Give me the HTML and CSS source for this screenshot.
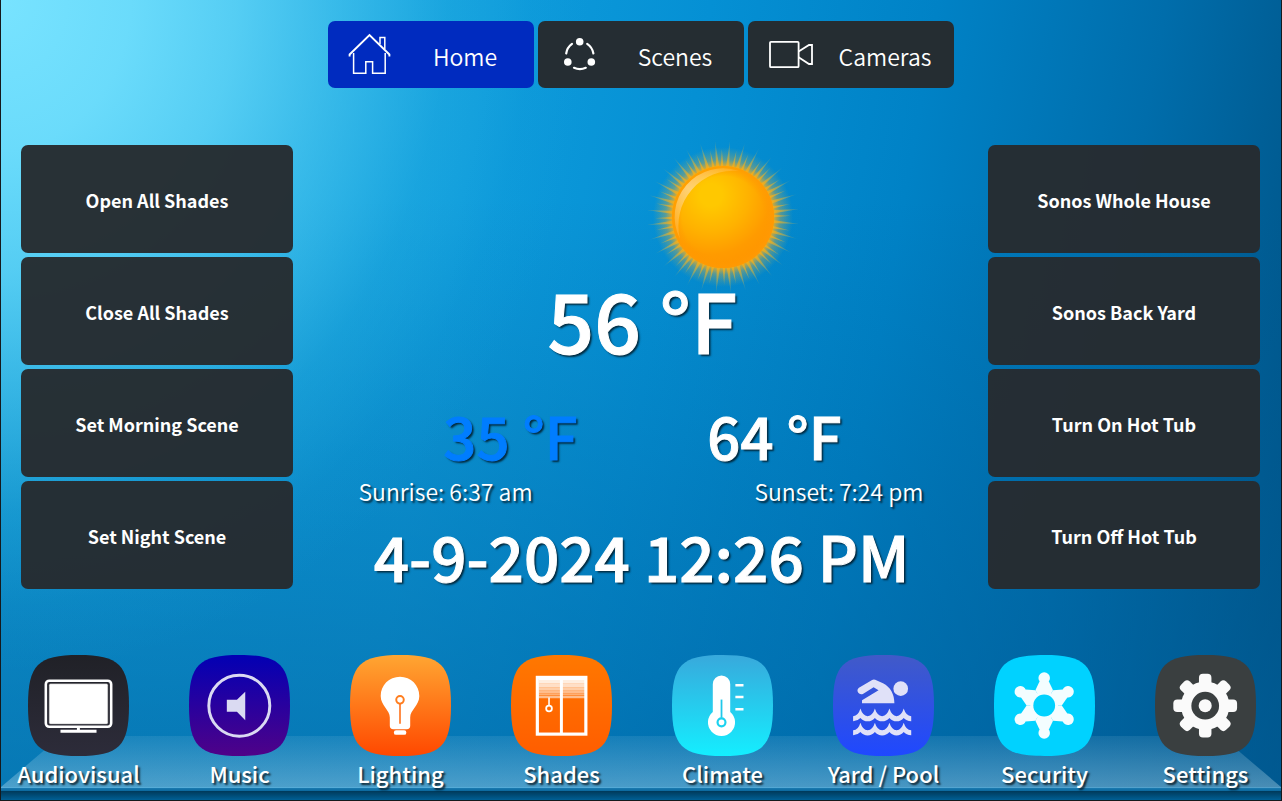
FILE: index.html
```html
<!DOCTYPE html>
<html lang="en">
<head>
<meta charset="UTF-8" />
<meta name="viewport" content="width=device-width, initial-scale=1" />
<title>Home Control</title>
<link rel="stylesheet" href="styles.css">
</head>
<body>

<nav class="tabs">
  <button class="tab active">
    <svg class="tab-icon" viewBox="0 0 48 48" fill="none" stroke="#fff" stroke-width="1.5">
      <path d="M3.6 25.5V23.5L23.5 4L43.4 23.5V25.5" stroke-width="1.9"/>
      <path d="M7.6 22V42.2H19.8V30.8H26.6V42.2H39.2V22"/>
      <path d="M34 13V6.5H38.8V18"/>
    </svg>
    <span>Home</span>
  </button>
  <button class="tab">
    <svg class="tab-icon" viewBox="0 0 48 48" fill="none" stroke="#fff" stroke-width="2.2" stroke-linecap="round">
      <path d="M10.2 22.5A14.3 14.3 0 0 1 16 12.8M31.2 12.8A14.3 14.3 0 0 1 37.4 22.5M18 36.8A15 15 0 0 0 29.8 36.8"/>
      <g fill="#fff" stroke="none">
        <circle cx="23.7" cy="10.7" r="3.8"/>
        <circle cx="11.8" cy="31" r="3.8"/>
        <circle cx="35.3" cy="31" r="3.8"/>
      </g>
    </svg>
    <span>Scenes</span>
  </button>
  <button class="tab">
    <svg class="tab-icon" viewBox="0 0 48 48" fill="none" stroke="#fff" stroke-width="1.8">
      <rect x="4" y="10.8" width="28.6" height="25.4" rx="1"/>
      <path d="M32.6 20.5L43 14H46V33H43L32.6 26.3"/>
    </svg>
    <span>Cameras</span>
  </button>
</nav>

<main class="panel">
  <div class="side">
    <button class="action">Open All Shades</button>
    <button class="action">Close All Shades</button>
    <button class="action">Set Morning Scene</button>
    <button class="action">Set Night Scene</button>
  </div>

  <section class="weather">
    <div class="sky">
      <svg class="sun" viewBox="-75 -75 150 150">
        <defs>
          <radialGradient id="glow" gradientUnits="userSpaceOnUse" cx="0" cy="0" r="70">
            <stop offset="0.72" stop-color="#ffae10" stop-opacity="0.9"/>
            <stop offset="0.82" stop-color="#d9b040" stop-opacity="0.4"/>
            <stop offset="1" stop-color="#a0b070" stop-opacity="0"/>
          </radialGradient>
          <radialGradient id="ray" gradientUnits="userSpaceOnUse" cx="0" cy="0" r="76">
            <stop offset="0.66" stop-color="#ffae10" stop-opacity="0.8"/>
            <stop offset="0.82" stop-color="#e8b52c" stop-opacity="0.5"/>
            <stop offset="1" stop-color="#c9b45a" stop-opacity="0.15"/>
          </radialGradient>
          <radialGradient id="disc" gradientUnits="userSpaceOnUse" cx="-12" cy="-22" r="74">
            <stop offset="0.15" stop-color="#ffc800"/>
            <stop offset="0.5" stop-color="#ffb200"/>
            <stop offset="0.8" stop-color="#ff9b00"/>
            <stop offset="1" stop-color="#ff9500"/>
          </radialGradient>
          <radialGradient id="rim" gradientUnits="userSpaceOnUse" cx="0" cy="0" r="51">
            <stop offset="0.8" stop-color="#ff9800" stop-opacity="0"/>
            <stop offset="1" stop-color="#ff9a04" stop-opacity="0.9"/>
          </radialGradient>
          <linearGradient id="shine" gradientUnits="userSpaceOnUse" x1="-44" y1="26" x2="18" y2="-46">
            <stop offset="0" stop-color="#ffd890" stop-opacity="0.15"/>
            <stop offset="0.5" stop-color="#ffd890" stop-opacity="0.8"/>
            <stop offset="1" stop-color="#ffd890" stop-opacity="0.15"/>
          </linearGradient>
          <g id="rays" fill="url(#ray)">
            <path d="M-1.7 -48L0 -77L1.7 -48Z"/>
            <path d="M-1.7 -48L0 -77L1.7 -48Z" transform="rotate(11.25)"/>
            <path d="M-1.7 -48L0 -77L1.7 -48Z" transform="rotate(22.5)"/>
            <path d="M-1.7 -48L0 -77L1.7 -48Z" transform="rotate(33.75)"/>
            <path d="M-1.4 -48L0 -68L1.4 -48Z" transform="rotate(5)"/>
            <path d="M-1.4 -48L0 -68L1.4 -48Z" transform="rotate(17.5)"/>
            <path d="M-1.4 -48L0 -68L1.4 -48Z" transform="rotate(28)"/>
            <path d="M-1.4 -48L0 -68L1.4 -48Z" transform="rotate(40)"/>
          </g>
        </defs>
        <circle r="70" fill="url(#glow)"/>
        <g transform="rotate(-6)">
          <use href="#rays"/>
          <use href="#rays" transform="rotate(45)"/>
          <use href="#rays" transform="rotate(90)"/>
          <use href="#rays" transform="rotate(135)"/>
          <use href="#rays" transform="rotate(180)"/>
          <use href="#rays" transform="rotate(225)"/>
          <use href="#rays" transform="rotate(270)"/>
          <use href="#rays" transform="rotate(315)"/>
        </g>
        <circle r="51" fill="url(#disc)"/>
        <circle r="51" fill="url(#rim)"/>
        <path d="M-43 22A48.5 48.5 0 0 1 16 -46A55 55 0 0 0 -43 22Z" fill="url(#shine)"/>
      </svg>
    </div>
    <div class="temp">56 °F</div>
    <div class="range">
      <span class="low">35 °F</span>
      <span class="high">64 °F</span>
    </div>
    <div class="sun-times">
      <span>Sunrise: 6:37 am</span>
      <span>Sunset: 7:24 pm</span>
    </div>
    <div class="clock">4-9-2024 12:26 PM</div>
  </section>

  <div class="side">
    <button class="action">Sonos Whole House</button>
    <button class="action">Sonos Back Yard</button>
    <button class="action">Turn On Hot Tub</button>
    <button class="action">Turn Off Hot Tub</button>
  </div>
</main>

<!-- tile shape shared by all dock icons -->
<svg width="0" height="0" class="defs">
  <defs>
    <path id="tile" d="M0 51C0 10 10 0 51 0S102 10 102 51S92 102 51 102S0 92 0 51Z"/>
    <linearGradient id="g-av" x2="0" y2="1"><stop stop-color="#202127"/><stop offset="1" stop-color="#2d2c3a"/></linearGradient>
    <linearGradient id="g-music" x2="0" y2="1"><stop stop-color="#0200b4"/><stop offset="1" stop-color="#4f0288"/></linearGradient>
    <linearGradient id="g-light" x2="0" y2="1"><stop stop-color="#ffa632"/><stop offset="1" stop-color="#ff4800"/></linearGradient>
    <linearGradient id="g-shade" x2="0" y2="1"><stop stop-color="#ff7800"/><stop offset="1" stop-color="#ff5d00"/></linearGradient>
    <linearGradient id="g-climate" x2="0" y2="1"><stop stop-color="#38a9dc"/><stop offset="1" stop-color="#14eeff"/></linearGradient>
    <linearGradient id="g-pool" x2="0" y2="1"><stop stop-color="#415ac8"/><stop offset="1" stop-color="#1f48ff"/></linearGradient>
  </defs>
</svg>

<footer class="dock">
  <button class="app">
    <svg class="app-icon" viewBox="0 0 102 102">
      <use href="#tile" fill="url(#g-av)"/>
      <rect x="18" y="26" width="66" height="46.5" rx="3.5" fill="none" stroke="#fff" stroke-width="2.6"/>
      <rect x="21.3" y="29" width="59.4" height="40.8" rx="1.5" fill="#fff" stroke="#777" stroke-width="0.5"/>
      <path d="M49.4 73H52.4V75.6H69.2V78.6H32.8V75.6H49.4Z" fill="#fff"/>
    </svg>
    <span>Audiovisual</span>
  </button>
  <button class="app">
    <svg class="app-icon" viewBox="0 0 102 102">
      <use href="#tile" fill="url(#g-music)"/>
      <circle cx="50.8" cy="51.2" r="30.8" fill="none" stroke="#dadaf2" stroke-width="3"/>
      <path d="M38.2 45.2H48.4L56.8 37V66L48.4 57.2H38.2Z" fill="#dadaf2"/>
    </svg>
    <span>Music</span>
  </button>
  <button class="app">
    <svg class="app-icon" viewBox="0 0 102 102">
      <use href="#tile" fill="url(#g-light)"/>
      <path d="M50.5 22C39.5 22 31 30.7 31 41.3C31 51 40.2 55.5 40.2 63V71.5Q40.2 75 43.7 75H57.3Q60.8 75 60.8 71.5V63C60.8 55.5 70 51 70 41.3C70 30.7 61.5 22 50.5 22Z" fill="#fff"/>
      <rect x="44.3" y="76" width="12.6" height="4.6" rx="2.2" fill="#fff"/>
      <circle cx="50.5" cy="45.3" r="3.8" fill="none" stroke="#ff7d1e" stroke-width="2"/>
      <path d="M50.5 49V69.5" stroke="#ff7018" stroke-width="1.6"/>
    </svg>
    <span>Lighting</span>
  </button>
  <button class="app">
    <svg class="app-icon" viewBox="0 0 102 102">
      <use href="#tile" fill="url(#g-shade)"/>
      <path d="M28 25H75V29H28Z" fill="#fff" opacity="0.88"/>
      <path d="M28 29H75V33H28Z" fill="#fff" opacity="0.78"/>
      <path d="M28 33.4H75V36H28Z" fill="#fff" opacity="0.66"/>
      <path d="M28 36.4H75V38.8H28Z" fill="#fff" opacity="0.55"/>
      <path d="M28 39.2H75V41H28Z" fill="#fff" opacity="0.46"/>
      <path d="M28 41.4H75V43.6H28Z" fill="#fff" opacity="0.55"/>
      <g fill="none" stroke="#fff">
        <rect x="26.6" y="22.6" width="49" height="57.3" stroke-width="3.2"/>
        <path d="M50.9 22V80" stroke-width="3"/>
        <path d="M28 23.5H75" stroke-width="3.5"/>
        <path d="M38.4 43V51" stroke-width="1.6"/>
        <circle cx="38.4" cy="54" r="2.9" stroke-width="1.8"/>
      </g>
    </svg>
    <span>Shades</span>
  </button>
  <button class="app">
    <svg class="app-icon" viewBox="0 0 102 102">
      <use href="#tile" fill="url(#g-climate)"/>
      <path d="M41.2 29.5A8.8 8.8 0 0 1 58.8 29.5V57.5A13.7 13.7 0 1 1 41.2 57.5Z" fill="#fff"/>
      <path d="M64 30.5H72.2M64 42.5H72.2M64 54.7H72.2" stroke="#fff" stroke-width="2.6"/>
      <path d="M50 45V63.5" stroke="#20c8ea" stroke-width="1.8"/>
      <circle cx="50" cy="68" r="4" fill="none" stroke="#1cd2f0" stroke-width="2.2"/>
    </svg>
    <span>Climate</span>
  </button>
  <button class="app">
    <svg class="app-icon" viewBox="0 0 102 102" fill="#e0e1f8">
      <use href="#tile" fill="url(#g-pool)"/>
      <circle cx="68.4" cy="34" r="7.4"/>
      <path d="M26.2 33.2L39.5 25.2Q41 24.3 42.6 25L50.5 28.6C58 32.5 62 39.5 62 48.8H29.3V45.8L46 35.5L41 32.6L30.2 39.3C26.2 41 22.6 36 26.2 33.2Z"/>
      <path id="wave" d="M20.3 61.8Q25.6 61.2 27.7 54Q29.8 61 35 61.8Q40.2 61 42.3 54Q44.4 61 49.6 61.8Q54.8 61 57 54Q59.2 61 64.2 61.8Q69.3 61 71.4 54Q73.6 61.2 79 61.8V66.8Q74 66.5 71.4 63.5Q68.5 66.9 64.2 66.9Q60 66.9 57 63.5Q54 66.9 49.6 66.9Q45.3 66.9 42.3 63.5Q39.3 66.9 35 66.9Q30.7 66.9 27.7 63.5Q25 66.5 20.3 66.8Z"/>
      <use href="#wave" y="14.3"/>
    </svg>
    <span>Yard / Pool</span>
  </button>
  <button class="app">
    <svg class="app-icon" viewBox="0 0 102 102" fill="#f3fdff">
      <use href="#tile" fill="#00d2ff"/>
      <g transform="translate(50.7 51)">
        <g id="arm">
          <path d="M0 0L-8.9 -15.4L-4.6 -24.5H4.6L8.9 -15.4Z"/>
          <circle cy="-27.8" r="5.8"/>
        </g>
        <use href="#arm" transform="rotate(60)"/>
        <use href="#arm" transform="rotate(120)"/>
        <use href="#arm" transform="rotate(180)"/>
        <use href="#arm" transform="rotate(240)"/>
        <use href="#arm" transform="rotate(300)"/>
        <circle r="14"/>
        <circle r="11" fill="#00d2ff"/>
      </g>
    </svg>
    <span>Security</span>
  </button>
  <button class="app">
    <svg class="app-icon" viewBox="0 0 102 102" fill="#fafafa">
      <use href="#tile" fill="#3a3f40"/>
      <g transform="translate(50.7 51.2)">
        <rect id="tooth" x="-6.3" y="-32.2" width="12.6" height="64.4" rx="4"/>
        <use href="#tooth" transform="rotate(45)"/>
        <use href="#tooth" transform="rotate(90)"/>
        <use href="#tooth" transform="rotate(135)"/>
        <circle r="24.5"/>
        <circle r="14" fill="#3a3f40"/>
        <circle r="6.6"/>
      </g>
    </svg>
    <span>Settings</span>
  </button>
</footer>

</body>
</html>
```
FILE: styles.css
```css
* {
  box-sizing: border-box;
}
body {
  margin: 0;
  min-height: 100vh;
  display: flex;
  flex-direction: column;
  border: 1px solid #15191c;
  border-top: none;
  font-family: "Noto Sans CJK SC", "Noto Sans", sans-serif;
  color: #fff;
  background:
    radial-gradient(ellipse 46% 84% at 0% 0%, #78e3ff 0%, rgba(112,223,253,0.94) 22%, rgba(100,216,249,0.82) 40%, rgba(80,204,242,0.6) 58%, rgba(50,185,230,0.3) 76%, rgba(30,168,222,0.1) 90%, rgba(20,160,215,0) 100%),
    linear-gradient(180deg, rgba(0,95,155,0) 25%, rgba(0,95,155,0.62) 100%),
    linear-gradient(100deg, #12a0dc 0%, #0e9bdb 35%, #0590d4 50%, #0082c6 66%, #006dab 82%, #004f80 100%);
}
button {
  border: none;
  padding: 0;
  margin: 0;
  background: none;
  color: #fff;
  font-family: inherit;
  cursor: pointer;
}
.defs {
  position: absolute;
}
.tabs {
  display: flex;
  justify-content: center;
  gap: 4px;
  padding-top: 21px;
}
.tab {
  display: flex;
  align-items: center;
  width: 206px;
  height: 67px;
  padding-left: 18px;
  border-radius: 7px;
  background: rgba(38,43,47,0.98);
  font-size: 23px;
  font-weight: 350;
  line-height: 36px;
}
.tab.active {
  background: #002bbf;
}
.tab-icon {
  width: 48px;
  height: 48px;
}
.tab span {
  flex: 1;
  padding: 2px 0 0 2px;
}
.panel {
  display: flex;
  justify-content: space-between;
  margin-top: 57px;
  padding: 0 21px 0 20px;
}
.side {
  display: flex;
  flex-direction: column;
  gap: 4px;
  width: 272px;
}
.action {
  height: 108px;
  padding-top: 2px;
  border-radius: 7px;
  background: rgba(38,43,47,0.97);
  font-size: 18px;
  font-weight: 700;
}
.weather {
  width: 566px;
  text-align: center;
  font-weight: 500;
  text-shadow: 2px 2px 2px rgba(0,0,0,0.7);
}
.sky {
  height: 126px;
  padding-left: 164px;
}
.sun {
  width: 150px;
  height: 150px;
  margin-top: -3px;
}
.temp, .range, .clock {
  -webkit-text-stroke: 1px currentColor;
}
.temp {
  padding-left: 4px;
  font-size: 82px;
  line-height: 96px;
}
.range {
  display: flex;
  justify-content: center;
  margin-top: 32px;
  padding-left: 4px;
  font-size: 58px;
  line-height: 72px;
}
.range span {
  width: 264px;
}
.low {
  color: #007dff;
}
.sun-times {
  display: flex;
  justify-content: space-between;
  padding-left: 1px;
  font-size: 23px;
  line-height: 40px;
  font-weight: 350;
}
.clock {
  padding-left: 2px;
  font-size: 62px;
  line-height: 88px;
}
.dock {
  position: relative;
  display: flex;
  justify-content: space-between;
  margin-top: auto;
  padding: 1px 15px 10px 17px;
  background: linear-gradient(180deg, transparent 133px, rgba(150,215,245,0.55) 133px, rgba(150,215,245,0.55) 134px, #1a7ab0 134px, #0a689e 137px, #00395a 137px, #005f94 100%);
}
/* glass shelf under the icons */
.dock::before {
  content: "";
  position: absolute;
  left: 0;
  right: 0;
  top: 82px;
  height: 51px;
  background: linear-gradient(180deg, rgba(190,225,240,0.1), rgba(190,225,240,0.38));
  clip-path: polygon(60px 0, calc(100% - 60px) 0, 100% 100%, 0 100%);
}
.app {
  position: relative;
  display: flex;
  flex-direction: column;
  align-items: center;
  width: 121px;
  font-size: 22px;
  font-weight: 500;
  line-height: 34px;
  white-space: nowrap;
  text-shadow: 2px 2px 2px rgba(0,0,0,0.75);
}
.app-icon {
  width: 101px;
  height: 101px;
}
```
